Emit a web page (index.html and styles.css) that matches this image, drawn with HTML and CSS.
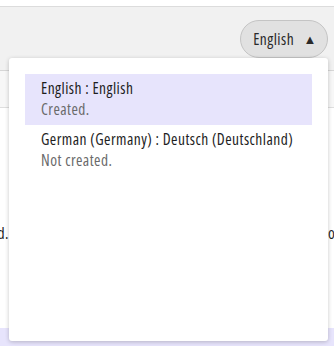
FILE: index.html
```html
<!DOCTYPE html>
<html lang="en">
<head>
    <meta charset="UTF-8">
    <meta name="viewport" content="width=device-width, initial-scale=1.0">
    <title>Languages</title>
    <link rel="stylesheet" href="styles.css">
</head>
<body>
    <div class="topbar"></div>
    <div class="header">
        <button class="lang-button">English <span class="caret">&#9650;</span></button>
    </div>
    <div class="subbar"></div>
    <div class="content">
        <div class="row">
            <div class="cell-left"><span>Created.</span></div>
            <div class="cell-mid"></div>
            <div class="cell-right"><span>or</span></div>
        </div>
    </div>
    <div class="footer-band"></div>

    <!-- language dropdown, opened -->
    <div class="dropdown">
        <div class="item selected">
            <div class="item-title">English : English</div>
            <div class="item-status">Created.</div>
        </div>
        <div class="item">
            <div class="item-title">German (Germany) : Deutsch (Deutschland)</div>
            <div class="item-status">Not created.</div>
        </div>
    </div>
</body>
</html>
```

FILE: styles.css
```css
body {
    margin: 0;
    font-family: "Open Sans", "Noto Sans", sans-serif;
    font-size: 15.5px;
    font-stretch: 87%;
    letter-spacing: 0.45px;
    color: #1e1e1e;
    background: #ffffff;
    height: 346px;
    overflow: hidden;
    position: relative;
}
.topbar {
    height: 6px;
    background: #ffffff;
    border-bottom: 1px solid #dcdcdc;
}
.header {
    height: 63px;
    background: #f1f1f1;
    border-bottom: 1px solid #d6d6d6;
    display: flex;
    justify-content: flex-end;
    align-items: flex-start;
    padding-right: 6px;
}
.lang-button {
    margin-top: 13px;
    height: 38px;
    width: 88px;
    border: 1px solid #c4c4c4;
    border-radius: 19px;
    background: #e1e1e1;
    color: #2a2a2a;
    font-family: inherit;
    font-size: 15.5px;
    font-stretch: 87%;
    letter-spacing: 0.45px;
    padding: 0 0 0 2px;
    white-space: nowrap;
}
.caret {
    font-size: 13px;
    margin-left: 6px;
    position: relative;
    top: -1px;
}
.subbar {
    height: 36px;
    background: #f7f7f7;
    border-bottom: 1px solid #dedede;
}
.content {
    height: 220px;
    padding-top: 114px;
    box-sizing: border-box;
}
.row {
    display: flex;
}
.cell-left {
    width: 9px;
    overflow: hidden;
    display: flex;
    justify-content: flex-end;
    white-space: nowrap;
}
.cell-mid {
    flex: 1;
}
.cell-right {
    width: 6px;
    overflow: hidden;
    white-space: nowrap;
}
.footer-band {
    height: 20px;
    background: #e7e4fc;
}
.dropdown {
    position: absolute;
    left: 9px;
    top: 58px;
    width: 319px;
    height: 283px;
    box-sizing: border-box;
    background: #ffffff;
    border-radius: 3px;
    box-shadow: 0 1px 4px rgba(0, 0, 0, 0.22);
    padding: 16px;
}
.item {
    padding: 4px 16px 5px;
    line-height: 21px;
    white-space: nowrap;
}
.item.selected {
    background: #e7e4fc;
}
.item-title {
    color: #1e1e1e;
}
.item-status {
    color: #6a6a6a;
}
```
